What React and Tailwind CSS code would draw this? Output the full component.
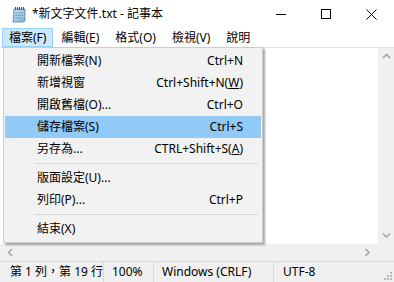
import React from "react";

function NotepadIcon() {
  return (
    <svg width="16" height="17" viewBox="0 0 16 17">
      <defs>
        <linearGradient id="pg" x1="0" y1="0" x2="1" y2="1">
          <stop offset="0" stopColor="#c9e3f5" />
          <stop offset="1" stopColor="#7fb3d9" />
        </linearGradient>
      </defs>
      <path d="M3 3 H14 V15 L12 16 H2 Z" fill="url(#pg)" stroke="#4d7ea8" strokeWidth="0.8" />
      <line x1="4" y1="7" x2="12" y2="7" stroke="#6f98bb" strokeWidth="0.7" />
      <line x1="4" y1="9.5" x2="12" y2="9.5" stroke="#6f98bb" strokeWidth="0.7" />
      <line x1="4" y1="12" x2="11" y2="12" stroke="#6f98bb" strokeWidth="0.7" />
      {[4, 6, 8, 10, 12].map((x) => (
        <rect key={x} x={x} y="1" width="1" height="3" fill="#555" />
      ))}
    </svg>
  );
}

function Chevron({ dir }) {
  const d = {
    up: "M1 5 L4.5 1.5 L8 5",
    down: "M1 1.5 L4.5 5 L8 1.5",
    left: "M5 1 L1.5 4.5 L5 8",
    right: "M1.5 1 L5 4.5 L1.5 8",
  }[dir];
  const vertical = dir === "up" || dir === "down";
  return (
    <svg width={vertical ? 9 : 7} height={vertical ? 7 : 9} viewBox={vertical ? "0 0 9 7" : "0 0 7 9"}>
      <path d={d} fill="none" stroke="#a6a6a6" strokeWidth="1.6" />
    </svg>
  );
}

const items = [
  { label: "開新檔案(N)", key: "Ctrl+N" },
  { label: "新增視窗", key: <>Ctrl+Shift+N(<span className="underline">W</span>)</> },
  { label: "開啟舊檔(O)...", key: "Ctrl+O" },
  { label: "儲存檔案(S)", key: "Ctrl+S", active: true },
  { label: "另存為...", key: <>CTRL+Shift+S(<span className="underline">A</span>)</> },
  { sep: true },
  { label: "版面設定(U)..." },
  { label: "列印(P)...", key: "Ctrl+P" },
  { sep: true },
  { label: "結束(X)" },
];

export default function App() {
  return (
    <div className="relative w-[394px] h-[282px] overflow-hidden bg-white text-[12px] text-black whitespace-nowrap font-['Noto_Sans','Noto_Sans_CJK_TC',sans-serif] flex flex-col">
      {/* title bar */}
      <div className="h-[28px] flex items-center shrink-0">
        <div className="ml-[11px] mt-[1px]">
          <NotepadIcon />
        </div>
        <span className="ml-[5px] text-[12px]">*新文字文件.txt - 記事本</span>
        <div className="ml-auto flex h-full">
          <div className="w-[45px] flex items-center justify-center">
            <div className="w-[10px] h-[1px] bg-black" />
          </div>
          <div className="w-[45px] flex items-center justify-center">
            <div className="w-[10px] h-[10px] border border-black" />
          </div>
          <div className="w-[46px] flex items-center justify-center">
            <svg width="11" height="11" viewBox="0 0 11 11">
              <path d="M0.5 0.5 L10.5 10.5 M10.5 0.5 L0.5 10.5" stroke="#000" strokeWidth="1" />
            </svg>
          </div>
        </div>
      </div>

      {/* menu bar */}
      <div className="h-[19px] flex items-center shrink-0">
        <div className="ml-[2px] h-[19px] px-[6px] flex items-center bg-[#cce8ff] border border-[#99d1ff]">檔案(F)</div>
        <div className="ml-[8px]">編輯(E)</div>
        <div className="ml-[16px]">格式(O)</div>
        <div className="ml-[16px]">檢視(V)</div>
        <div className="ml-[16px]">說明</div>
      </div>

      {/* editor */}
      <div className="flex-1 flex border-t border-[#e3e3e3]">
        <div className="flex-1 bg-white" />
        <div className="w-[16px] bg-[#f0f0f0] flex flex-col items-center justify-between py-[5px]">
          <Chevron dir="up" />
          <Chevron dir="down" />
        </div>
      </div>

      {/* horizontal scrollbar */}
      <div className="h-[17px] shrink-0 flex bg-[#f0f0f0]">
        <div className="flex-1 flex items-center justify-between px-[7px]">
          <Chevron dir="left" />
          <Chevron dir="right" />
        </div>
        <div className="w-[16px]" />
      </div>

      {/* status bar */}
      <div className="h-[21px] shrink-0 flex items-center bg-[#f0f0f0] border-t border-[#d9d9d9] relative">
        <div className="w-[104px] pl-[10px] h-full flex items-center border-r border-[#dadada]">第 1 列，第 19 行</div>
        <div className="w-[50px] pl-[8px] h-full flex items-center border-r border-[#dadada]">100%</div>
        <div className="w-[120px] pl-[8px] h-full flex items-center border-r border-[#dadada]">Windows (CRLF)</div>
        <div className="pl-[9px] h-full flex items-center">UTF-8</div>
        <svg className="absolute right-[2px] bottom-[2px]" width="10" height="10" viewBox="0 0 10 10">
          {[[8, 2], [8, 5], [5, 5], [8, 8], [5, 8], [2, 8]].map(([x, y]) => (
            <rect key={x + "-" + y} x={x} y={y} width="2" height="2" fill="#b8b8b8" />
          ))}
        </svg>
      </div>

      {/* file menu dropdown */}
      <div className="absolute left-[3px] top-[47px] w-[260px] bg-[#f2f2f2] border border-[#cccccc] shadow-[2px_2px_2px_rgba(0,0,0,0.35)] pt-[2px] pb-[2px] px-[1px]">
        {items.map((it, i) =>
          it.sep ? (
            <div key={i} className="h-[7px] flex items-center pl-[29px] pr-[3px]">
              <div className="w-full h-[1px] bg-[#d7d7d7]" />
            </div>
          ) : (
            <div
              key={i}
              className={`h-[22px] flex items-center justify-between pl-[32px] pr-[18px] ${it.active ? "bg-[#91c9f7]" : ""}`}
            >
              <span>{it.label}</span>
              <span>{it.key}</span>
            </div>
          )
        )}
      </div>
    </div>
  );
}
